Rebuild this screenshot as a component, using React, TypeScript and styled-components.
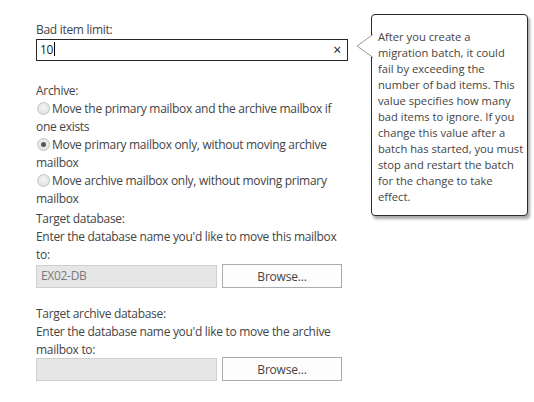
import styled, { createGlobalStyle } from "styled-components";

const GlobalStyle = createGlobalStyle`
  body {
    margin: 0;
    background: #ffffff;
    font-family: "Open Sans", "Noto Sans", sans-serif;
    color: #333333;
  }
`;

const Page = styled.div`
  position: relative;
  width: 534px;
  height: 402px;
  padding: 21px 0 0 36px;
  box-sizing: border-box;
`;

const Form = styled.div`
  width: 312px;
  display: flex;
  flex-direction: column;
  font-size: 12px;
  line-height: 18px;
  letter-spacing: -0.3px;
`;

const Label = styled.div<{ $gap?: number }>`
  margin-top: ${(p) => p.$gap ?? 0}px;
  color: #444444;
`;

const TextBox = styled.div`
  height: 22px;
  box-sizing: border-box;
  border: 1px solid #262626;
  display: flex;
  align-items: center;
  padding: 0 6px 0 3px;
  font-size: 12px;
`;

const Value = styled.span`
  flex: 1;
  color: #222222;
`;

const Caret = styled.span`
  display: inline-block;
  width: 1px;
  height: 14px;
  background: #000;
  vertical-align: -2px;
  margin-left: 1px;
`;

const Clear = styled.span`
  font-size: 14px;
  color: #222;
  line-height: 1;
`;

const RadioRow = styled.label`
  display: block;
  color: #444444;
`;

const Radio = styled.span<{ $checked?: boolean }>`
  display: inline-block;
  box-sizing: border-box;
  width: 13px;
  height: 13px;
  border-radius: 50%;
  border: 1px solid #c4c4c4;
  background: radial-gradient(circle at 50% 40%, #f4f4f4 0%, #dcdcdc 100%);
  margin: 0 2px 0 1px;
  vertical-align: -2px;
  position: relative;
  &::after {
    content: "";
    display: ${(p) => (p.$checked ? "block" : "none")};
    position: absolute;
    left: 3px;
    top: 3px;
    width: 5px;
    height: 5px;
    border-radius: 50%;
    background: #555;
  }
`;

const BrowseRow = styled.div<{ $gap?: number }>`
  display: flex;
  align-items: center;
  gap: 5px;
  margin-top: ${(p) => p.$gap ?? 0}px;
`;

const DisabledBox = styled.div`
  width: 181px;
  height: 23px;
  box-sizing: border-box;
  background: #e6e6e6;
  border: 1px solid #cfcfcf;
  color: #7a7a7a;
  padding: 0 4px;
  display: flex;
  align-items: center;
  font-size: 12px;
`;

const Button = styled.button`
  width: 120px;
  height: 24px;
  box-sizing: border-box;
  background: #fdfdfd;
  border: 1px solid #ababab;
  color: #444;
  font-family: inherit;
  font-size: 12px;
  letter-spacing: -0.2px;
  padding: 0;
`;

const Tip = styled.div`
  position: absolute;
  left: 371px;
  top: 14px;
  width: 157px;
  height: 202px;
  box-sizing: border-box;
  background: #fff;
  border: 1px solid #2b2b2b;
  border-radius: 4px;
  box-shadow: 2px 3px 3px rgba(0, 0, 0, 0.35);
  padding: 14px 4px 0 6px;
  font-size: 11.2px;
  line-height: 16px;
  color: #444;
  white-space: nowrap;
`;

const Arrow = styled.svg`
  position: absolute;
  left: -16px;
  top: 19px;
`;

const tipLines = [
  "After you create a",
  "migration batch, it could",
  "fail by exceeding the",
  "number of bad items. This",
  "value specifies how many",
  "bad items to ignore. If you",
  "change this value after a",
  "batch has started, you must",
  "stop and restart the batch",
  "for the change to take",
  "effect.",
];

export default function App() {
  return (
    <Page>
      <GlobalStyle />
      <Form>
        <Label>Bad item limit:</Label>
        <TextBox>
          <Value>
            10
            <Caret />
          </Value>
          <Clear>×</Clear>
        </TextBox>
        <Label $gap={21}>Archive:</Label>
        <RadioRow>
          <Radio />
          Move the primary mailbox and the archive mailbox if one exists
        </RadioRow>
        <RadioRow>
          <Radio $checked />
          Move primary mailbox only, without moving archive mailbox
        </RadioRow>
        <RadioRow>
          <Radio />
          Move archive mailbox only, without moving primary mailbox
        </RadioRow>
        <Label $gap={2}>Target database:</Label>
        <Label>Enter the database name you'd like to move this mailbox to:</Label>
        <BrowseRow>
          <DisabledBox>EX02-DB</DisabledBox>
          <Button>Browse...</Button>
        </BrowseRow>
        <Label $gap={17}>Target archive database:</Label>
        <Label>Enter the database name you'd like to move the archive mailbox to:</Label>
        <BrowseRow $gap={-2}>
          <DisabledBox />
          <Button>Browse...</Button>
        </BrowseRow>
      </Form>
      <Tip>
        <Arrow width="17" height="25" viewBox="0 0 17 25">
          <path d="M17 0.5 L1 12 L17 23.5" fill="#fff" stroke="#9a9a9a" strokeWidth="1" />
        </Arrow>
        {tipLines.map((line) => (
          <div key={line}>{line}</div>
        ))}
      </Tip>
    </Page>
  );
}
